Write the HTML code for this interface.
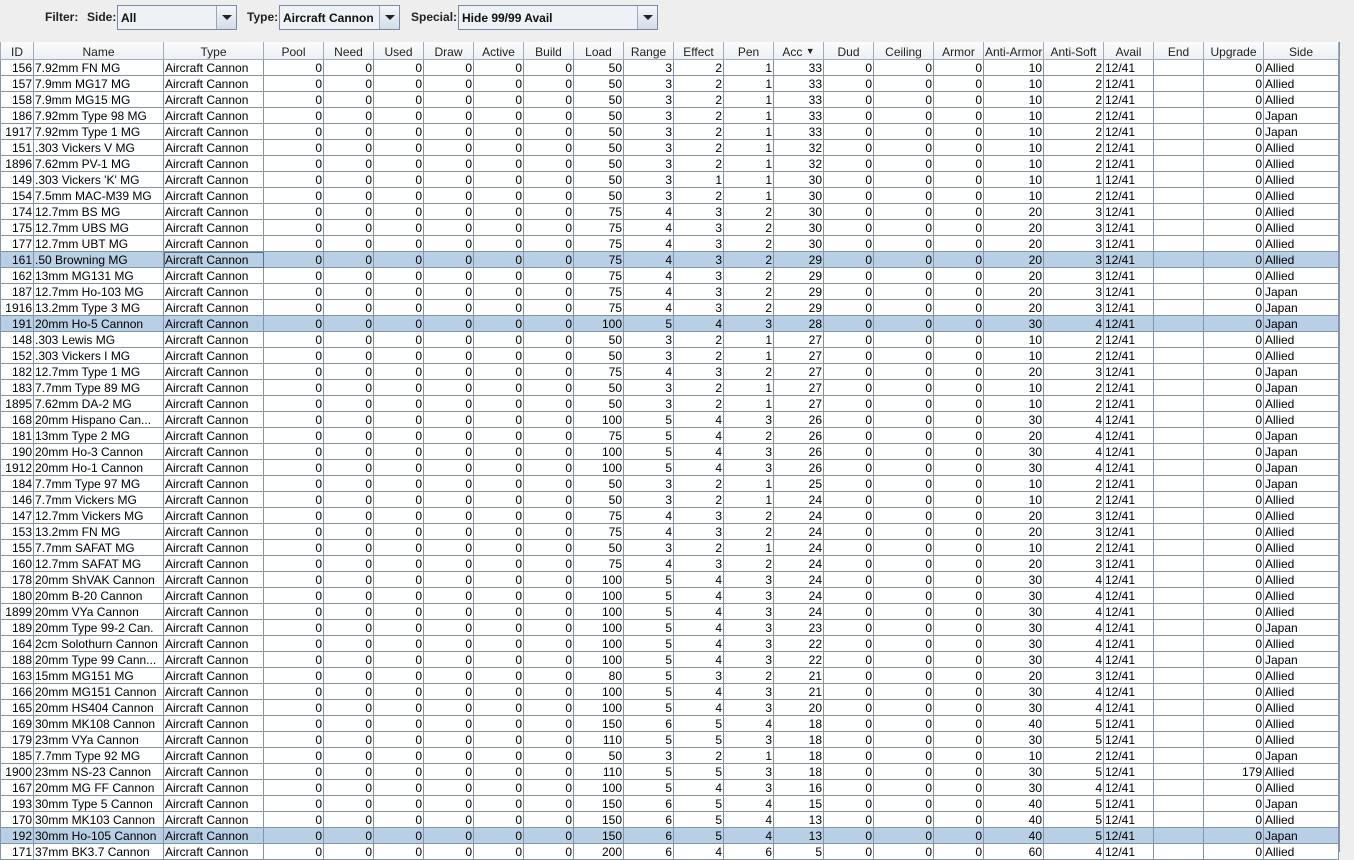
<!DOCTYPE html>
<html><head><meta charset="utf-8"><style>
*{margin:0;padding:0;box-sizing:border-box}
body{width:1354px;height:852px;overflow:hidden;background:#eeeeee;font-family:"Liberation Sans",Arial,sans-serif;font-size:12px;color:#000;position:relative}
.lbl{position:absolute;top:10px;font-weight:bold;font-size:12px;color:#222}
.cb{position:absolute;top:5px;height:25px;border:1px solid #7a8aa0;background:#eef1f5;font-weight:bold;padding:5px 0 0 3px;color:#111}
.cb .b{position:absolute;right:0;top:0;width:20px;height:23px;border-left:1px solid #9aa8ba;background:linear-gradient(#f4f7fb,#d4dce8)}
.cb .b:after{content:"";position:absolute;left:5px;top:9px;border-left:5px solid transparent;border-right:5px solid transparent;border-top:5px solid #222}
#t{position:absolute;left:0;top:42px;width:1340px}
.r{height:16px;white-space:nowrap;font-size:0}
.r span{display:inline-block;vertical-align:top;height:16px;border-right:1px solid #8494a8;border-bottom:1px solid #8494a8;font-size:12px;line-height:17px;padding:0 1px;overflow:hidden;text-align:right;white-space:nowrap;background:#fff}
.r.s span{background:#b8cfe5}
.r span:nth-child(1){width:34px;border-left:1px solid #8494a8}
.r span:nth-child(2){width:130px;text-align:left}
.r span:nth-child(3){width:100px;text-align:left}
.r span:nth-child(4){width:60px}
.r span:nth-child(16){width:60px}
.r span:nth-child(18){width:60px}
.r span:nth-child(19){width:60px}
.r span:nth-child(20){width:50px;text-align:left}
.r span:nth-child(21){width:50px;text-align:left}
.r span:nth-child(22){width:60px}
.r span:nth-child(23){width:75px;text-align:left}
.r span{width:50px}
.r.h{height:18px}
.r.h span{height:18px;line-height:20px;text-align:center!important;background:linear-gradient(#fbfcfd,#eceff3);border-color:#a3adba;color:#222}
.foc{outline:1px solid #5a6f8c;outline-offset:-1px}
#edge{position:absolute;left:1339px;top:42px;width:1px;height:810px;background:#8494a8}
</style></head><body>
<div class="lbl" style="left:45px">Filter:</div>
<div class="lbl" style="left:87px">Side:</div>
<div class="cb" style="left:117px;width:120px">All<div class="b"></div></div>
<div class="lbl" style="left:247px">Type:</div>
<div class="cb" style="left:279px;width:121px">Aircraft Cannon<div class="b"></div></div>
<div class="lbl" style="left:411px">Special:</div>
<div class="cb" style="left:458px;width:200px">Hide 99/99 Avail<div class="b"></div></div>
<div id="t">
<div class="r h"><span>ID</span><span>Name</span><span>Type</span><span>Pool</span><span>Need</span><span>Used</span><span>Draw</span><span>Active</span><span>Build</span><span>Load</span><span>Range</span><span>Effect</span><span>Pen</span><span>Acc <span style="display:inline-block;border:none;width:auto;height:auto;padding:0;background:none;font-size:9px;vertical-align:top;line-height:19px">▼</span></span><span>Dud</span><span>Ceiling</span><span>Armor</span><span>Anti-Armor</span><span>Anti-Soft</span><span>Avail</span><span>End</span><span>Upgrade</span><span>Side</span></div>
<div class="r"><span>156</span><span>7.92mm FN MG</span><span>Aircraft Cannon</span><span>0</span><span>0</span><span>0</span><span>0</span><span>0</span><span>0</span><span>50</span><span>3</span><span>2</span><span>1</span><span>33</span><span>0</span><span>0</span><span>0</span><span>10</span><span>2</span><span>12/41</span><span></span><span>0</span><span>Allied</span></div>
<div class="r"><span>157</span><span>7.9mm MG17 MG</span><span>Aircraft Cannon</span><span>0</span><span>0</span><span>0</span><span>0</span><span>0</span><span>0</span><span>50</span><span>3</span><span>2</span><span>1</span><span>33</span><span>0</span><span>0</span><span>0</span><span>10</span><span>2</span><span>12/41</span><span></span><span>0</span><span>Allied</span></div>
<div class="r"><span>158</span><span>7.9mm MG15 MG</span><span>Aircraft Cannon</span><span>0</span><span>0</span><span>0</span><span>0</span><span>0</span><span>0</span><span>50</span><span>3</span><span>2</span><span>1</span><span>33</span><span>0</span><span>0</span><span>0</span><span>10</span><span>2</span><span>12/41</span><span></span><span>0</span><span>Allied</span></div>
<div class="r"><span>186</span><span>7.92mm Type 98 MG</span><span>Aircraft Cannon</span><span>0</span><span>0</span><span>0</span><span>0</span><span>0</span><span>0</span><span>50</span><span>3</span><span>2</span><span>1</span><span>33</span><span>0</span><span>0</span><span>0</span><span>10</span><span>2</span><span>12/41</span><span></span><span>0</span><span>Japan</span></div>
<div class="r"><span>1917</span><span>7.92mm Type 1 MG</span><span>Aircraft Cannon</span><span>0</span><span>0</span><span>0</span><span>0</span><span>0</span><span>0</span><span>50</span><span>3</span><span>2</span><span>1</span><span>33</span><span>0</span><span>0</span><span>0</span><span>10</span><span>2</span><span>12/41</span><span></span><span>0</span><span>Japan</span></div>
<div class="r"><span>151</span><span>.303 Vickers V MG</span><span>Aircraft Cannon</span><span>0</span><span>0</span><span>0</span><span>0</span><span>0</span><span>0</span><span>50</span><span>3</span><span>2</span><span>1</span><span>32</span><span>0</span><span>0</span><span>0</span><span>10</span><span>2</span><span>12/41</span><span></span><span>0</span><span>Allied</span></div>
<div class="r"><span>1896</span><span>7.62mm PV-1 MG</span><span>Aircraft Cannon</span><span>0</span><span>0</span><span>0</span><span>0</span><span>0</span><span>0</span><span>50</span><span>3</span><span>2</span><span>1</span><span>32</span><span>0</span><span>0</span><span>0</span><span>10</span><span>2</span><span>12/41</span><span></span><span>0</span><span>Allied</span></div>
<div class="r"><span>149</span><span>.303 Vickers 'K' MG</span><span>Aircraft Cannon</span><span>0</span><span>0</span><span>0</span><span>0</span><span>0</span><span>0</span><span>50</span><span>3</span><span>1</span><span>1</span><span>30</span><span>0</span><span>0</span><span>0</span><span>10</span><span>1</span><span>12/41</span><span></span><span>0</span><span>Allied</span></div>
<div class="r"><span>154</span><span>7.5mm MAC-M39 MG</span><span>Aircraft Cannon</span><span>0</span><span>0</span><span>0</span><span>0</span><span>0</span><span>0</span><span>50</span><span>3</span><span>2</span><span>1</span><span>30</span><span>0</span><span>0</span><span>0</span><span>10</span><span>2</span><span>12/41</span><span></span><span>0</span><span>Allied</span></div>
<div class="r"><span>174</span><span>12.7mm BS MG</span><span>Aircraft Cannon</span><span>0</span><span>0</span><span>0</span><span>0</span><span>0</span><span>0</span><span>75</span><span>4</span><span>3</span><span>2</span><span>30</span><span>0</span><span>0</span><span>0</span><span>20</span><span>3</span><span>12/41</span><span></span><span>0</span><span>Allied</span></div>
<div class="r"><span>175</span><span>12.7mm UBS MG</span><span>Aircraft Cannon</span><span>0</span><span>0</span><span>0</span><span>0</span><span>0</span><span>0</span><span>75</span><span>4</span><span>3</span><span>2</span><span>30</span><span>0</span><span>0</span><span>0</span><span>20</span><span>3</span><span>12/41</span><span></span><span>0</span><span>Allied</span></div>
<div class="r"><span>177</span><span>12.7mm UBT MG</span><span>Aircraft Cannon</span><span>0</span><span>0</span><span>0</span><span>0</span><span>0</span><span>0</span><span>75</span><span>4</span><span>3</span><span>2</span><span>30</span><span>0</span><span>0</span><span>0</span><span>20</span><span>3</span><span>12/41</span><span></span><span>0</span><span>Allied</span></div>
<div class="r s"><span>161</span><span>.50 Browning MG</span><span class="foc">Aircraft Cannon</span><span>0</span><span>0</span><span>0</span><span>0</span><span>0</span><span>0</span><span>75</span><span>4</span><span>3</span><span>2</span><span>29</span><span>0</span><span>0</span><span>0</span><span>20</span><span>3</span><span>12/41</span><span></span><span>0</span><span>Allied</span></div>
<div class="r"><span>162</span><span>13mm MG131 MG</span><span>Aircraft Cannon</span><span>0</span><span>0</span><span>0</span><span>0</span><span>0</span><span>0</span><span>75</span><span>4</span><span>3</span><span>2</span><span>29</span><span>0</span><span>0</span><span>0</span><span>20</span><span>3</span><span>12/41</span><span></span><span>0</span><span>Allied</span></div>
<div class="r"><span>187</span><span>12.7mm Ho-103 MG</span><span>Aircraft Cannon</span><span>0</span><span>0</span><span>0</span><span>0</span><span>0</span><span>0</span><span>75</span><span>4</span><span>3</span><span>2</span><span>29</span><span>0</span><span>0</span><span>0</span><span>20</span><span>3</span><span>12/41</span><span></span><span>0</span><span>Japan</span></div>
<div class="r"><span>1916</span><span>13.2mm Type 3 MG</span><span>Aircraft Cannon</span><span>0</span><span>0</span><span>0</span><span>0</span><span>0</span><span>0</span><span>75</span><span>4</span><span>3</span><span>2</span><span>29</span><span>0</span><span>0</span><span>0</span><span>20</span><span>3</span><span>12/41</span><span></span><span>0</span><span>Japan</span></div>
<div class="r s"><span>191</span><span>20mm Ho-5 Cannon</span><span>Aircraft Cannon</span><span>0</span><span>0</span><span>0</span><span>0</span><span>0</span><span>0</span><span>100</span><span>5</span><span>4</span><span>3</span><span>28</span><span>0</span><span>0</span><span>0</span><span>30</span><span>4</span><span>12/41</span><span></span><span>0</span><span>Japan</span></div>
<div class="r"><span>148</span><span>.303 Lewis MG</span><span>Aircraft Cannon</span><span>0</span><span>0</span><span>0</span><span>0</span><span>0</span><span>0</span><span>50</span><span>3</span><span>2</span><span>1</span><span>27</span><span>0</span><span>0</span><span>0</span><span>10</span><span>2</span><span>12/41</span><span></span><span>0</span><span>Allied</span></div>
<div class="r"><span>152</span><span>.303 Vickers I MG</span><span>Aircraft Cannon</span><span>0</span><span>0</span><span>0</span><span>0</span><span>0</span><span>0</span><span>50</span><span>3</span><span>2</span><span>1</span><span>27</span><span>0</span><span>0</span><span>0</span><span>10</span><span>2</span><span>12/41</span><span></span><span>0</span><span>Allied</span></div>
<div class="r"><span>182</span><span>12.7mm Type 1 MG</span><span>Aircraft Cannon</span><span>0</span><span>0</span><span>0</span><span>0</span><span>0</span><span>0</span><span>75</span><span>4</span><span>3</span><span>2</span><span>27</span><span>0</span><span>0</span><span>0</span><span>20</span><span>3</span><span>12/41</span><span></span><span>0</span><span>Japan</span></div>
<div class="r"><span>183</span><span>7.7mm Type 89 MG</span><span>Aircraft Cannon</span><span>0</span><span>0</span><span>0</span><span>0</span><span>0</span><span>0</span><span>50</span><span>3</span><span>2</span><span>1</span><span>27</span><span>0</span><span>0</span><span>0</span><span>10</span><span>2</span><span>12/41</span><span></span><span>0</span><span>Japan</span></div>
<div class="r"><span>1895</span><span>7.62mm DA-2 MG</span><span>Aircraft Cannon</span><span>0</span><span>0</span><span>0</span><span>0</span><span>0</span><span>0</span><span>50</span><span>3</span><span>2</span><span>1</span><span>27</span><span>0</span><span>0</span><span>0</span><span>10</span><span>2</span><span>12/41</span><span></span><span>0</span><span>Allied</span></div>
<div class="r"><span>168</span><span>20mm Hispano Can...</span><span>Aircraft Cannon</span><span>0</span><span>0</span><span>0</span><span>0</span><span>0</span><span>0</span><span>100</span><span>5</span><span>4</span><span>3</span><span>26</span><span>0</span><span>0</span><span>0</span><span>30</span><span>4</span><span>12/41</span><span></span><span>0</span><span>Allied</span></div>
<div class="r"><span>181</span><span>13mm Type 2 MG</span><span>Aircraft Cannon</span><span>0</span><span>0</span><span>0</span><span>0</span><span>0</span><span>0</span><span>75</span><span>5</span><span>4</span><span>2</span><span>26</span><span>0</span><span>0</span><span>0</span><span>20</span><span>4</span><span>12/41</span><span></span><span>0</span><span>Japan</span></div>
<div class="r"><span>190</span><span>20mm Ho-3 Cannon</span><span>Aircraft Cannon</span><span>0</span><span>0</span><span>0</span><span>0</span><span>0</span><span>0</span><span>100</span><span>5</span><span>4</span><span>3</span><span>26</span><span>0</span><span>0</span><span>0</span><span>30</span><span>4</span><span>12/41</span><span></span><span>0</span><span>Japan</span></div>
<div class="r"><span>1912</span><span>20mm Ho-1 Cannon</span><span>Aircraft Cannon</span><span>0</span><span>0</span><span>0</span><span>0</span><span>0</span><span>0</span><span>100</span><span>5</span><span>4</span><span>3</span><span>26</span><span>0</span><span>0</span><span>0</span><span>30</span><span>4</span><span>12/41</span><span></span><span>0</span><span>Japan</span></div>
<div class="r"><span>184</span><span>7.7mm Type 97 MG</span><span>Aircraft Cannon</span><span>0</span><span>0</span><span>0</span><span>0</span><span>0</span><span>0</span><span>50</span><span>3</span><span>2</span><span>1</span><span>25</span><span>0</span><span>0</span><span>0</span><span>10</span><span>2</span><span>12/41</span><span></span><span>0</span><span>Japan</span></div>
<div class="r"><span>146</span><span>7.7mm Vickers MG</span><span>Aircraft Cannon</span><span>0</span><span>0</span><span>0</span><span>0</span><span>0</span><span>0</span><span>50</span><span>3</span><span>2</span><span>1</span><span>24</span><span>0</span><span>0</span><span>0</span><span>10</span><span>2</span><span>12/41</span><span></span><span>0</span><span>Allied</span></div>
<div class="r"><span>147</span><span>12.7mm Vickers MG</span><span>Aircraft Cannon</span><span>0</span><span>0</span><span>0</span><span>0</span><span>0</span><span>0</span><span>75</span><span>4</span><span>3</span><span>2</span><span>24</span><span>0</span><span>0</span><span>0</span><span>20</span><span>3</span><span>12/41</span><span></span><span>0</span><span>Allied</span></div>
<div class="r"><span>153</span><span>13.2mm FN MG</span><span>Aircraft Cannon</span><span>0</span><span>0</span><span>0</span><span>0</span><span>0</span><span>0</span><span>75</span><span>4</span><span>3</span><span>2</span><span>24</span><span>0</span><span>0</span><span>0</span><span>20</span><span>3</span><span>12/41</span><span></span><span>0</span><span>Allied</span></div>
<div class="r"><span>155</span><span>7.7mm SAFAT MG</span><span>Aircraft Cannon</span><span>0</span><span>0</span><span>0</span><span>0</span><span>0</span><span>0</span><span>50</span><span>3</span><span>2</span><span>1</span><span>24</span><span>0</span><span>0</span><span>0</span><span>10</span><span>2</span><span>12/41</span><span></span><span>0</span><span>Allied</span></div>
<div class="r"><span>160</span><span>12.7mm SAFAT MG</span><span>Aircraft Cannon</span><span>0</span><span>0</span><span>0</span><span>0</span><span>0</span><span>0</span><span>75</span><span>4</span><span>3</span><span>2</span><span>24</span><span>0</span><span>0</span><span>0</span><span>20</span><span>3</span><span>12/41</span><span></span><span>0</span><span>Allied</span></div>
<div class="r"><span>178</span><span>20mm ShVAK Cannon</span><span>Aircraft Cannon</span><span>0</span><span>0</span><span>0</span><span>0</span><span>0</span><span>0</span><span>100</span><span>5</span><span>4</span><span>3</span><span>24</span><span>0</span><span>0</span><span>0</span><span>30</span><span>4</span><span>12/41</span><span></span><span>0</span><span>Allied</span></div>
<div class="r"><span>180</span><span>20mm B-20 Cannon</span><span>Aircraft Cannon</span><span>0</span><span>0</span><span>0</span><span>0</span><span>0</span><span>0</span><span>100</span><span>5</span><span>4</span><span>3</span><span>24</span><span>0</span><span>0</span><span>0</span><span>30</span><span>4</span><span>12/41</span><span></span><span>0</span><span>Allied</span></div>
<div class="r"><span>1899</span><span>20mm VYa Cannon</span><span>Aircraft Cannon</span><span>0</span><span>0</span><span>0</span><span>0</span><span>0</span><span>0</span><span>100</span><span>5</span><span>4</span><span>3</span><span>24</span><span>0</span><span>0</span><span>0</span><span>30</span><span>4</span><span>12/41</span><span></span><span>0</span><span>Allied</span></div>
<div class="r"><span>189</span><span>20mm Type 99-2 Can.</span><span>Aircraft Cannon</span><span>0</span><span>0</span><span>0</span><span>0</span><span>0</span><span>0</span><span>100</span><span>5</span><span>4</span><span>3</span><span>23</span><span>0</span><span>0</span><span>0</span><span>30</span><span>4</span><span>12/41</span><span></span><span>0</span><span>Japan</span></div>
<div class="r"><span>164</span><span>2cm Solothurn Cannon</span><span>Aircraft Cannon</span><span>0</span><span>0</span><span>0</span><span>0</span><span>0</span><span>0</span><span>100</span><span>5</span><span>4</span><span>3</span><span>22</span><span>0</span><span>0</span><span>0</span><span>30</span><span>4</span><span>12/41</span><span></span><span>0</span><span>Allied</span></div>
<div class="r"><span>188</span><span>20mm Type 99 Cann...</span><span>Aircraft Cannon</span><span>0</span><span>0</span><span>0</span><span>0</span><span>0</span><span>0</span><span>100</span><span>5</span><span>4</span><span>3</span><span>22</span><span>0</span><span>0</span><span>0</span><span>30</span><span>4</span><span>12/41</span><span></span><span>0</span><span>Japan</span></div>
<div class="r"><span>163</span><span>15mm MG151 MG</span><span>Aircraft Cannon</span><span>0</span><span>0</span><span>0</span><span>0</span><span>0</span><span>0</span><span>80</span><span>5</span><span>3</span><span>2</span><span>21</span><span>0</span><span>0</span><span>0</span><span>20</span><span>3</span><span>12/41</span><span></span><span>0</span><span>Allied</span></div>
<div class="r"><span>166</span><span>20mm MG151 Cannon</span><span>Aircraft Cannon</span><span>0</span><span>0</span><span>0</span><span>0</span><span>0</span><span>0</span><span>100</span><span>5</span><span>4</span><span>3</span><span>21</span><span>0</span><span>0</span><span>0</span><span>30</span><span>4</span><span>12/41</span><span></span><span>0</span><span>Allied</span></div>
<div class="r"><span>165</span><span>20mm HS404 Cannon</span><span>Aircraft Cannon</span><span>0</span><span>0</span><span>0</span><span>0</span><span>0</span><span>0</span><span>100</span><span>5</span><span>4</span><span>3</span><span>20</span><span>0</span><span>0</span><span>0</span><span>30</span><span>4</span><span>12/41</span><span></span><span>0</span><span>Allied</span></div>
<div class="r"><span>169</span><span>30mm MK108 Cannon</span><span>Aircraft Cannon</span><span>0</span><span>0</span><span>0</span><span>0</span><span>0</span><span>0</span><span>150</span><span>6</span><span>5</span><span>4</span><span>18</span><span>0</span><span>0</span><span>0</span><span>40</span><span>5</span><span>12/41</span><span></span><span>0</span><span>Allied</span></div>
<div class="r"><span>179</span><span>23mm VYa Cannon</span><span>Aircraft Cannon</span><span>0</span><span>0</span><span>0</span><span>0</span><span>0</span><span>0</span><span>110</span><span>5</span><span>5</span><span>3</span><span>18</span><span>0</span><span>0</span><span>0</span><span>30</span><span>5</span><span>12/41</span><span></span><span>0</span><span>Allied</span></div>
<div class="r"><span>185</span><span>7.7mm Type 92 MG</span><span>Aircraft Cannon</span><span>0</span><span>0</span><span>0</span><span>0</span><span>0</span><span>0</span><span>50</span><span>3</span><span>2</span><span>1</span><span>18</span><span>0</span><span>0</span><span>0</span><span>10</span><span>2</span><span>12/41</span><span></span><span>0</span><span>Japan</span></div>
<div class="r"><span>1900</span><span>23mm NS-23 Cannon</span><span>Aircraft Cannon</span><span>0</span><span>0</span><span>0</span><span>0</span><span>0</span><span>0</span><span>110</span><span>5</span><span>5</span><span>3</span><span>18</span><span>0</span><span>0</span><span>0</span><span>30</span><span>5</span><span>12/41</span><span></span><span>179</span><span>Allied</span></div>
<div class="r"><span>167</span><span>20mm MG FF Cannon</span><span>Aircraft Cannon</span><span>0</span><span>0</span><span>0</span><span>0</span><span>0</span><span>0</span><span>100</span><span>5</span><span>4</span><span>3</span><span>16</span><span>0</span><span>0</span><span>0</span><span>30</span><span>4</span><span>12/41</span><span></span><span>0</span><span>Allied</span></div>
<div class="r"><span>193</span><span>30mm Type 5 Cannon</span><span>Aircraft Cannon</span><span>0</span><span>0</span><span>0</span><span>0</span><span>0</span><span>0</span><span>150</span><span>6</span><span>5</span><span>4</span><span>15</span><span>0</span><span>0</span><span>0</span><span>40</span><span>5</span><span>12/41</span><span></span><span>0</span><span>Japan</span></div>
<div class="r"><span>170</span><span>30mm MK103 Cannon</span><span>Aircraft Cannon</span><span>0</span><span>0</span><span>0</span><span>0</span><span>0</span><span>0</span><span>150</span><span>6</span><span>5</span><span>4</span><span>13</span><span>0</span><span>0</span><span>0</span><span>40</span><span>5</span><span>12/41</span><span></span><span>0</span><span>Allied</span></div>
<div class="r s"><span>192</span><span>30mm Ho-105 Cannon</span><span>Aircraft Cannon</span><span>0</span><span>0</span><span>0</span><span>0</span><span>0</span><span>0</span><span>150</span><span>6</span><span>5</span><span>4</span><span>13</span><span>0</span><span>0</span><span>0</span><span>40</span><span>5</span><span>12/41</span><span></span><span>0</span><span>Japan</span></div>
<div class="r"><span>171</span><span>37mm BK3.7 Cannon</span><span>Aircraft Cannon</span><span>0</span><span>0</span><span>0</span><span>0</span><span>0</span><span>0</span><span>200</span><span>6</span><span>4</span><span>6</span><span>5</span><span>0</span><span>0</span><span>0</span><span>60</span><span>4</span><span>12/41</span><span></span><span>0</span><span>Allied</span></div>
</div>
<div id="edge"></div>
</body></html>
